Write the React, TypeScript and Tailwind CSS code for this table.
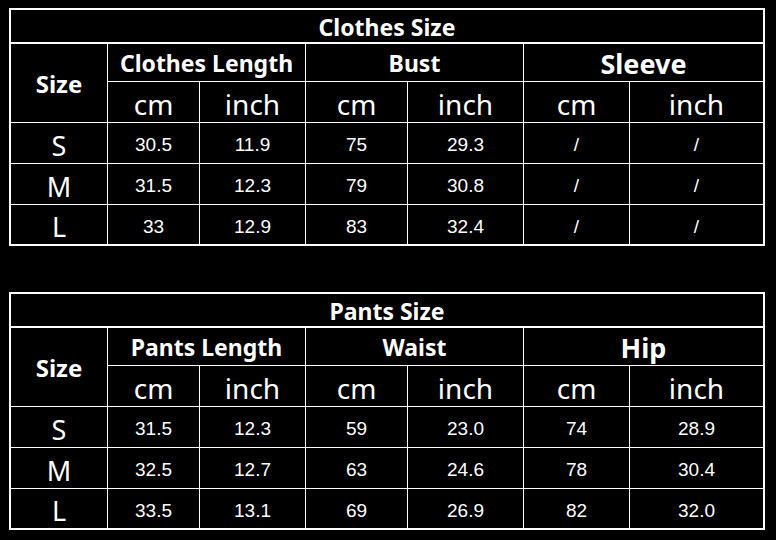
const clothes = {
  title: "Clothes Size",
  groups: [
    { name: "Clothes Length", big: false },
    { name: "Bust", big: false },
    { name: "Sleeve", big: true },
  ],
  rows: [
    ["S", "30.5", "11.9", "75", "29.3", "/", "/"],
    ["M", "31.5", "12.3", "79", "30.8", "/", "/"],
    ["L", "33", "12.9", "83", "32.4", "/", "/"],
  ],
};

const pants = {
  title: "Pants Size",
  groups: [
    { name: "Pants Length", big: false },
    { name: "Waist", big: false },
    { name: "Hip", big: true },
  ],
  rows: [
    ["S", "31.5", "12.3", "59", "23.0", "74", "28.9"],
    ["M", "32.5", "12.7", "63", "24.6", "78", "30.4"],
    ["L", "33.5", "13.1", "69", "26.9", "82", "32.0"],
  ],
};

type Chart = typeof clothes;

const cell = "bg-black flex items-center justify-center text-white leading-none";
const num = { fontFamily: '"Liberation Sans", Arial, sans-serif' };

const SizeTable = ({ data }: { data: Chart }) => {
  return (
    <div className="w-[756px] border-2 border-white bg-black">
      <div className="h-[34px] pt-[3px] border-b-2 border-white flex items-center justify-center text-white font-bold text-[23px] leading-none">
        {data.title}
      </div>
      <div className="grid grid-cols-[96px_91px_105px_101px_115px_105px_133px] grid-rows-[37px_40px_40px_40px_39px] gap-px bg-white">
        <div className={`${cell} row-span-2 pt-[2px] font-bold text-[24px]`}>Size</div>
        {data.groups.map((g) => (
          <div
            key={g.name}
            className={`${cell} col-span-2 pt-[2px] font-bold ${g.big ? "text-[27px]" : "text-[23px]"}`}
          >
            {g.name}
          </div>
        ))}
        {data.groups.map((g) => (
          <>
            <div key={g.name + "cm"} className={`${cell} pt-[4px] text-[28px]`}>cm</div>
            <div key={g.name + "in"} className={`${cell} pt-[4px] text-[28px]`}>inch</div>
          </>
        ))}
        {data.rows.map((r) =>
          r.map((v, i) =>
            i === 0 ? (
              <div key={r[0] + i} className={`${cell} pt-[4px] text-[27px]`}>
                {v}
              </div>
            ) : (
              <div key={r[0] + i} className={`${cell} pt-[3px] text-[19px]`} style={num}>
                {v}
              </div>
            )
          )
        )}
      </div>
    </div>
  );
};

export default function App() {
  return (
    <div
      className="w-[776px] h-[540px] bg-black pt-[8px] pl-[9px] flex flex-col gap-[46px]"
      style={{ fontFamily: '"Noto Sans", "Liberation Sans", sans-serif' }}
    >
      <SizeTable data={clothes} />
      <SizeTable data={pants} />
    </div>
  );
}
